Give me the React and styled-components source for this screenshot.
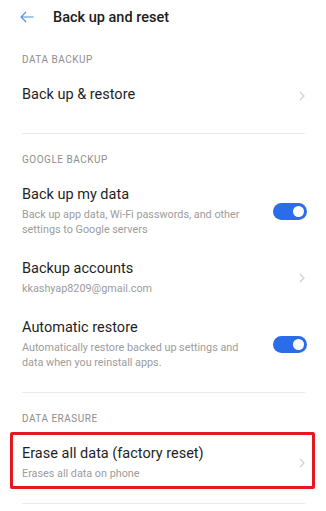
import React from "react";
import styled, { createGlobalStyle } from "styled-components";

const Global = createGlobalStyle`
  html, body { margin: 0; padding: 0; background: #ffffff; }
  body { font-family: Roboto, "Noto Sans", "Liberation Sans", sans-serif; -webkit-font-smoothing: antialiased; }
  * { box-sizing: border-box; }
`;

const Page = styled.div`
  width: 326px;
  min-height: 511px;
  background: #ffffff;
  overflow: hidden;
`;

const Header = styled.header`
  height: 34px;
  display: flex;
  align-items: center;
  padding-left: 20px;
  gap: 19px;
`;

const BackButton = styled.span`
  display: flex;
  align-items: center;
  width: 14px;
  height: 12px;
`;

const Title = styled.h1`
  margin: 0;
  font-size: 14.5px;
  font-weight: 500;
  color: #1c1c1c;
  letter-spacing: 0;
`;

const Section = styled.section`
  padding-bottom: 11px;
  border-bottom: 1px solid #ebebeb;
  margin: 0 21px 0 22px;
`;

const SectionTitle = styled.div`
  padding: 18px 0 6px;
  line-height: 16px;
  font-size: 10px;
  letter-spacing: 0.5px;
  color: #8e8e8e;
  text-transform: uppercase;
`;

const Row = styled.div`
  position: relative;
  min-height: 48px;
  padding: 11px 0 11px;
  display: flex;
  align-items: flex-start;
  gap: 20px;
  ${(p) =>
    p.$highlight &&
    `
    &::after {
      content: "";
      position: absolute;
      top: -1px;
      bottom: 3px;
      left: -12px;
      right: -10px;
      border: 3px solid #e3191f;
      border-radius: 2px;
      pointer-events: none;
    }
  `}
`;

const RowText = styled.div`
  flex: 1;
  min-width: 0;
`;

const RowTitle = styled.div`
  font-size: 14.5px;
  line-height: 20px;
  color: #1f1f1f;
`;

const RowSub = styled.div`
  margin-top: 2px;
  font-size: 10.8px;
  line-height: 15px;
  color: #9c9c9c;
`;

const Chevron = styled.span`
  flex: none;
  align-self: center;
  display: flex;
  margin-top: ${(p) => p.$offset || 0}px;
`;

const Toggle = styled.span`
  flex: none;
  align-self: center;
  width: 34px;
  height: 17px;
  border-radius: 9px;
  background: #2a6de9;
  position: relative;
  margin-right: -2px;
  &::after {
    content: "";
    position: absolute;
    right: 3px;
    top: 3px;
    width: 11px;
    height: 11px;
    border-radius: 50%;
    background: #ffffff;
  }
`;

const ChevronIcon = () => (
  <svg width="6" height="10" viewBox="0 0 6 10">
    <path d="M1 1 L5 5 L1 9" fill="none" stroke="#cfcfcf" strokeWidth="1.2" />
  </svg>
);

const items = [
  {
    title: "DATA BACKUP",
    rows: [{ title: "Back up & restore", kind: "chevron" }],
  },
  {
    title: "Google backup",
    rows: [
      {
        title: "Back up my data",
        sub: "Back up app data, Wi-Fi passwords, and other settings to Google servers",
        kind: "toggle",
      },
      { title: "Backup accounts", sub: "kkashyap8209@gmail.com", kind: "chevron" },
      {
        title: "Automatic restore",
        sub: "Automatically restore backed up settings and data when you reinstall apps.",
        kind: "toggle",
      },
    ],
  },
  {
    title: "Data erasure",
    rows: [
      {
        title: "Erase all data (factory reset)",
        sub: "Erases all data on phone",
        kind: "chevron",
        highlight: true,
      },
    ],
  },
];

export default function App() {
  return (
    <Page>
      <Global />
      <Header>
        <BackButton>
          <svg width="14" height="12" viewBox="0 0 14 12">
            <path d="M13.5 6 H1 M6 1 L1 6 L6 11" fill="none" stroke="#4b8fe0" strokeWidth="1.1" />
          </svg>
        </BackButton>
        <Title>Back up and reset</Title>
      </Header>
      {items.map((sec) => (
        <Section key={sec.title}>
          <SectionTitle>{sec.title}</SectionTitle>
          {sec.rows.map((r) => (
            <Row key={r.title} $highlight={r.highlight}>
              <RowText>
                <RowTitle>{r.title}</RowTitle>
                {r.sub && <RowSub>{r.sub}</RowSub>}
              </RowText>
              {r.kind === "toggle" ? (
                <Toggle />
              ) : (
                <Chevron $offset={r.sub ? 0 : -4}>
                  <ChevronIcon />
                </Chevron>
              )}
            </Row>
          ))}
        </Section>
      ))}
    </Page>
  );
}
